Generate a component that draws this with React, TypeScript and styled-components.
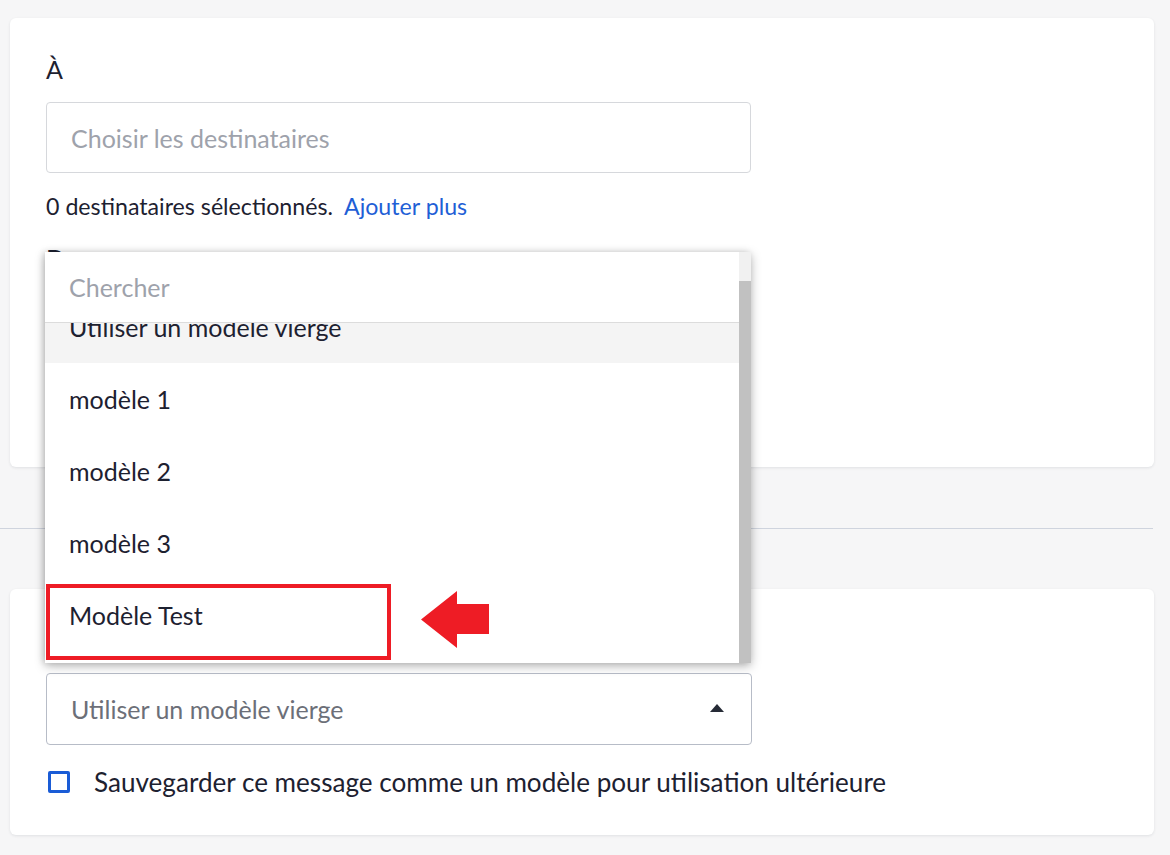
import React from "react";
import styled, { createGlobalStyle } from "styled-components";

const Global = createGlobalStyle`
  html, body { margin: 0; padding: 0; }
  body {
    background: #f6f6f7;
    font-family: Lato, "Open Sans", sans-serif;
    color: #1d2130;
    width: 1170px;
    height: 855px;
    overflow: hidden;
  }
`;

const Page = styled.div`
  width: 1154px;
  padding-top: 18px;
  display: flex;
  flex-direction: column;
`;

const Card = styled.section<{ $minH: number }>`
  position: relative;
  margin-left: 10px;
  width: 1144px;
  min-height: ${(p) => p.$minH}px;
  box-sizing: border-box;
  background: #fff;
  border-radius: 6px;
  box-shadow: 0 1px 3px rgba(30, 35, 60, 0.1);
  padding: 36px 36px 0 36px;
  display: flex;
  flex-direction: column;
`;

const Label = styled.div`
  font-size: 25px;
  line-height: 30px;
  color: #1d2130;
  margin-bottom: 18px;
`;

const Input = styled.div`
  width: 705px;
  height: 71px;
  box-sizing: border-box;
  border: 1px solid #d6d8dc;
  border-radius: 4px;
  display: flex;
  align-items: center;
  padding: 0 24px;
  font-size: 25px;
  color: #9ea2ab;
`;

const Helper = styled.div`
  margin-top: 18px;
  font-size: 23.2px;
  line-height: 30px;
  color: #1d2130;
`;

const Link = styled.a`
  color: #1f5fd6;
  margin-left: 11px;
  text-decoration: none;
`;

const Divider = styled.hr`
  margin: 61px 0 60px 0;
  border: none;
  height: 1px;
  background: #cfd4de;
  width: 1153px;
`;

const SecondLabel = styled(Label)`
  margin-top: 22px;
`;

const Select = styled.div`
  width: 706px;
  height: 72px;
  box-sizing: border-box;
  border: 1px solid #b7bcc7;
  border-radius: 4px;
  display: flex;
  align-items: center;
  justify-content: space-between;
  padding: 0 27px 0 24px;
  font-size: 25px;
  color: #6c6f78;
`;

const Caret = styled.span`
  width: 0;
  height: 0;
  border-left: 7px solid transparent;
  border-right: 7px solid transparent;
  border-bottom: 8px solid #262b36;
  margin-top: -2px;
`;

const CheckRow = styled.label`
  margin-top: 22px;
  display: flex;
  align-items: center;
  gap: 24px;
  font-size: 26.1px;
  line-height: 30px;
  color: #1d2130;
`;

const Box = styled.span`
  margin-left: 2px;
  width: 22px;
  height: 22px;
  box-sizing: border-box;
  border: 3px solid #1a5cd6;
  border-radius: 2px;
  flex-shrink: 0;
`;

const Dropdown = styled.div`
  position: absolute;
  left: 35px;
  top: 234px;
  width: 706px;
  height: 411px;
  background: #fff;
  box-shadow: 0 3px 10px rgba(0, 0, 0, 0.28), -2px 0 6px rgba(0, 0, 0, 0.12);
  display: flex;
  z-index: 10;
`;

const DropBody = styled.div`
  flex: 1;
  display: flex;
  flex-direction: column;
  overflow: hidden;
`;

const Search = styled.div`
  height: 71px;
  flex-shrink: 0;
  box-sizing: border-box;
  border-bottom: 1px solid #dcdcdc;
  display: flex;
  align-items: center;
  padding: 0 24px;
  font-size: 25px;
  color: #9ea2ab;
  background: #fff;
  position: relative;
  z-index: 1;
`;

const List = styled.ul<{ $scroll: number }>`
  list-style: none;
  margin: ${(p) => -p.$scroll}px 0 0 0;
  padding: 0;
`;

const Item = styled.li<{ $active?: boolean }>`
  height: 72px;
  display: flex;
  align-items: center;
  padding: 0 24px;
  font-size: 25px;
  color: #1d2130;
  background: ${(p) => (p.$active ? "#f4f4f4" : "#fff")};
`;

const Track = styled.div`
  width: 12px;
  background: #f1f1f1;
  display: flex;
  flex-direction: column;
`;

const Thumb = styled.div<{ $top: number }>`
  margin-top: ${(p) => p.$top}px;
  flex: 1;
  background: #c1c1c1;
`;

const Highlight = styled.div`
  position: absolute;
  left: 1px;
  top: 332px;
  width: 345px;
  height: 76px;
  box-sizing: border-box;
  border: 4px solid #ee1c25;
  pointer-events: none;
`;

const Arrow = styled.svg`
  position: absolute;
  left: 376px;
  top: 339px;
`;

export default function App() {
  const items = ["Utiliser un modèle vierge", "modèle 1", "modèle 2", "modèle 3", "Modèle Test"];
  return (
    <>
      <Global />
      <Page>
        <Card $minH={449}>
          <Label>À</Label>
          <Input>Choisir les destinataires</Input>
          <Helper>
            0 destinataires sélectionnés.
            <Link href="#">Ajouter plus</Link>
          </Helper>
          <SecondLabel>De</SecondLabel>
          <Dropdown>
            <DropBody>
              <Search>Chercher</Search>
              <List $scroll={32}>
                {items.map((t, i) => (
                  <Item key={t} $active={i === 0}>
                    {t}
                  </Item>
                ))}
              </List>
            </DropBody>
            <Track>
              <Thumb $top={29} />
            </Track>
            <Highlight />
            <Arrow width="69" height="57" viewBox="0 0 69 57">
              <polygon points="0,28.5 36,0 36,13 68,13 68,43 36,43 36,57" fill="#ee1c25" />
            </Arrow>
          </Dropdown>
        </Card>
        <Divider />
        <Card $minH={246}>
          <Label>Modèle</Label>
          <Select>
            <span>Utiliser un modèle vierge</span>
            <Caret />
          </Select>
          <CheckRow>
            <Box />
            Sauvegarder ce message comme un modèle pour utilisation ultérieure
          </CheckRow>
        </Card>
      </Page>
    </>
  );
}
